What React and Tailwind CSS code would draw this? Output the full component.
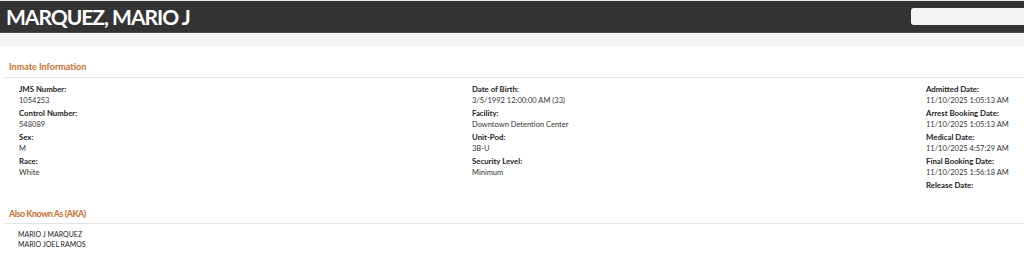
import React from "react";

const COLUMNS = [
  [
    { label: "JMS Number:", value: "1054253" },
    { label: "Control Number:", value: "548089" },
    { label: "Sex:", value: "M" },
    { label: "Race:", value: "White" }
  ],
  [
    { label: "Date of Birth:", value: "3/5/1992 12:00:00 AM (33)" },
    { label: "Facility:", value: "Downtown Detention Center" },
    { label: "Unit-Pod:", value: "3B-U" },
    { label: "Security Level:", value: "Minimum" }
  ],
  [
    { label: "Admitted Date:", value: "11/10/2025 1:05:13 AM" },
    { label: "Arrest Booking Date:", value: "11/10/2025 1:05:13 AM" },
    { label: "Medical Date:", value: "11/10/2025 4:57:29 AM" },
    { label: "Final Booking Date:", value: "11/10/2025 1:56:18 AM" },
    { label: "Release Date:", value: "" }
  ]
];

const ALIASES = ["MARIO J MARQUEZ", "MARIO JOEL RAMOS"];

function SectionTitle({ children, className = "", textClass = "" }) {
  return (
    <div className={`ml-[5px] border-b border-[#e3e3e3] pl-[4px] ${className}`}>
      <h2 className={`text-[9px] font-bold leading-[14px] text-[#c8702f] ${textClass}`}>{children}</h2>
    </div>
  );
}

function Field({ label, value }) {
  return (
    <div className="mb-[2px]">
      <p className="text-[7.8px] font-bold leading-[11px] text-[#222]">{label}</p>
      <p className="h-[11px] text-[7.5px] leading-[11px] text-[#333]">{value}</p>
    </div>
  );
}

export default function App() {
  return (
    <div className="h-[254px] w-[1024px] overflow-hidden bg-white font-['Lato','Liberation_Sans',sans-serif]">
      <div className="bg-[#e6e6e6] pt-px">
        <header className="flex h-[32px] items-center justify-between border-b border-[#4a4a4a] bg-[#333333] pl-[6px]">
          <h1 className="text-[21px] font-bold leading-none tracking-[-1px] text-white">MARQUEZ, MARIO J</h1>
          <div className="h-[17px] w-[113px] rounded-l-[3px] bg-[#f4f4f4]" />
        </header>
      </div>
      <div className="h-[13px] bg-[#f4f4f4]" />

      <SectionTitle className="pt-[14px] pb-[3px]">Inmate Information</SectionTitle>

      <div className="grid grid-cols-[453px_454px_1fr] pl-[19px] pt-[6px]">
        {COLUMNS.map((col, i) => (
          <div key={i}>
            {col.map((f) => (
              <Field key={f.label} label={f.label} value={f.value} />
            ))}
          </div>
        ))}
      </div>

      <SectionTitle className="pt-[3px] pb-[2px]" textClass="text-[8.5px] tracking-[-0.5px]">
        Also Known As (AKA)
      </SectionTitle>

      <div className="pl-[18px] pt-[5px]">
        {ALIASES.map((a) => (
          <p key={a} className="text-[7px] leading-[10px] text-[#222]">{a}</p>
        ))}
      </div>
    </div>
  );
}
